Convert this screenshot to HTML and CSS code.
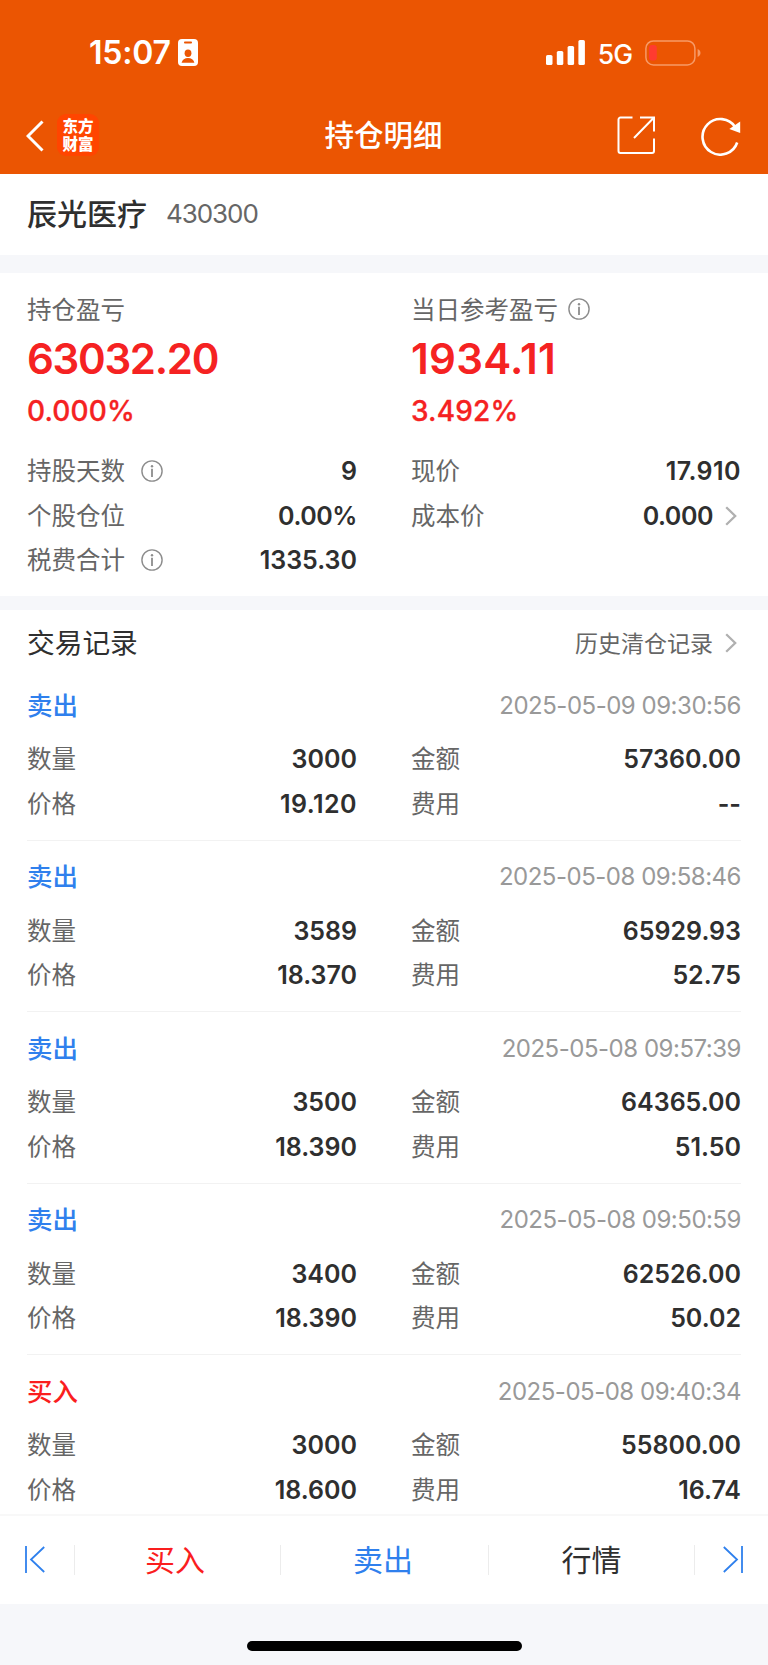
FILE: index.html
```html
<!DOCTYPE html>
<html lang="zh-CN">
<head>
<meta charset="utf-8">
<title>持仓明细</title>
<link rel="stylesheet" href="styles.css">
</head>
<body>
<svg class="defs" width="0" height="0" aria-hidden="true">
  <symbol id="info" viewBox="0 0 22 22"><circle cx="11" cy="11" r="10.1" fill="none" stroke="#8c8c8c" stroke-width="1.4"/><circle cx="11" cy="6.2" r="1.2" fill="#8c8c8c"/><path d="M11 8.8V17" stroke="#8c8c8c" stroke-width="1.8"/></symbol>
  <symbol id="chevron" viewBox="0 0 12 20"><path d="M1.2 1.2L10.2 10L1.2 18.8" fill="none" stroke="#b0b0b0" stroke-width="2.3"/></symbol>
</svg>
<div class="screen">
  <header class="header">
    <div class="status">
      <span class="clock">15:07</span>
      <svg class="badge" width="20" height="27" viewBox="0 0 20 27"><rect width="20" height="27" rx="4" fill="#fff"/><rect x="6" y="2.6" width="8" height="1.8" rx=".9" fill="#eb5502"/><ellipse cx="10" cy="14.2" rx="3.4" ry="3.7" fill="#eb5502"/><path d="M3.6 23.7C4.2 20.4 6.8 18.9 10 18.9s5.800 1.500 6.400 4.800z" fill="#eb5502"/></svg>
      <svg class="signal" width="39" height="25" viewBox="0 0 39 25" fill="#fff"><rect x="0" y="15" width="6.500" height="10" rx="1.600"/><rect x="10.800" y="11" width="6.500" height="14" rx="1.600"/><rect x="21.600" y="6" width="6.500" height="19" rx="1.600"/><rect x="32.400" y="0" width="6.500" height="25" rx="1.600"/></svg>
      <span class="net">5G</span>
      <svg class="battery" width="56" height="26" viewBox="0 0 56 26"><rect x=".9" y=".9" width="49" height="24" rx="7.500" fill="none" stroke="#f79a67" stroke-width="1.500"/><path d="M52.600 9v8c1.800-.7 2.900-2.300 2.900-4s-1.100-3.300-2.900-4z" fill="#f79a67"/><rect x="4" y="5" width="7.800" height="15.500" rx="3" fill="#ff3b30"/></svg>
    </div>
    <div class="titlebar">
      <svg class="back" width="18" height="32" viewBox="0 0 18 32"><path d="M16.500 1.500L2 16l14.500 14.500" fill="none" stroke="#fff" stroke-width="3"/></svg>
      <div class="logo">东方<br>财富</div>
      <h1 class="title">持仓明细</h1>
      <svg class="share" width="39" height="39" viewBox="0 0 39 39" fill="none" stroke="#fff" stroke-width="2"><path d="M15.500 1.500H3.500a2 2 0 0 0-2 2V35a2 2 0 0 0 2 2H35a2 2 0 0 0 2-2V22.500"/><path d="M23 1.500h14V15.500M37 1.500L17 22"/></svg>
      <svg class="refresh" width="40" height="40" viewBox="0 0 40 40"><path d="M34.300 11.200A17.800 17.800 0 1 0 36.200 26.500" fill="none" stroke="#fff" stroke-width="2.600"/><path d="M39.200 5.500V17L28.300 13z" fill="#fff"/></svg>
    </div>
  </header>

  <section class="stock"><h2 class="name">辰光医疗</h2><span class="code">430300</span></section>

  <section class="summary">
    <div class="col">
      <div class="caption">持仓盈亏</div>
      <div class="amount tight">63032.20</div>
      <div class="percent">0.000%</div>
      <div class="row"><span class="label">持股天数</span><svg class="info wide"><use href="#info"/></svg><span class="value">9</span></div>
      <div class="row"><span class="label">个股仓位</span><span class="value narrow">0.00%</span></div>
      <div class="row"><span class="label">税费合计</span><svg class="info wide"><use href="#info"/></svg><span class="value">1335.30</span></div>
    </div>
    <div class="col">
      <div class="caption">当日参考盈亏<svg class="info"><use href="#info"/></svg></div>
      <div class="amount">1934.11</div>
      <div class="percent">3.492%</div>
      <div class="row"><span class="label">现价</span><span class="value open">17.910</span></div>
      <div class="row"><span class="label">成本价</span><span class="value narrow">0.000</span><svg class="chevron"><use href="#chevron"/></svg></div>
    </div>
  </section>

  <section class="trades">
    <div class="trades-head"><h2 class="trades-title">交易记录</h2><span class="history">历史清仓记录</span><svg class="chevron"><use href="#chevron"/></svg></div>

    <article class="record">
      <div class="record-head"><span class="side sell">卖出</span><time class="time">2025-05-09 09:30:56</time></div>
      <div class="grid">
        <div class="row"><span class="label">数量</span><span class="value">3000</span></div>
        <div class="row"><span class="label">金额</span><span class="value">57360.00</span></div>
        <div class="row"><span class="label">价格</span><span class="value open">19.120</span></div>
        <div class="row"><span class="label">费用</span><span class="value">--</span></div>
      </div>
    </article>
    <article class="record">
      <div class="record-head"><span class="side sell">卖出</span><time class="time">2025-05-08 09:58:46</time></div>
      <div class="grid">
        <div class="row"><span class="label">数量</span><span class="value">3589</span></div>
        <div class="row"><span class="label">金额</span><span class="value">65929.93</span></div>
        <div class="row"><span class="label">价格</span><span class="value">18.370</span></div>
        <div class="row"><span class="label">费用</span><span class="value">52.75</span></div>
      </div>
    </article>
    <article class="record">
      <div class="record-head"><span class="side sell">卖出</span><time class="time">2025-05-08 09:57:39</time></div>
      <div class="grid">
        <div class="row"><span class="label">数量</span><span class="value">3500</span></div>
        <div class="row"><span class="label">金额</span><span class="value">64365.00</span></div>
        <div class="row"><span class="label">价格</span><span class="value">18.390</span></div>
        <div class="row"><span class="label">费用</span><span class="value">51.50</span></div>
      </div>
    </article>
    <article class="record">
      <div class="record-head"><span class="side sell">卖出</span><time class="time">2025-05-08 09:50:59</time></div>
      <div class="grid">
        <div class="row"><span class="label">数量</span><span class="value">3400</span></div>
        <div class="row"><span class="label">金额</span><span class="value">62526.00</span></div>
        <div class="row"><span class="label">价格</span><span class="value">18.390</span></div>
        <div class="row"><span class="label">费用</span><span class="value">50.02</span></div>
      </div>
    </article>
    <article class="record">
      <div class="record-head"><span class="side buy">买入</span><time class="time">2025-05-08 09:40:34</time></div>
      <div class="grid">
        <div class="row"><span class="label">数量</span><span class="value">3000</span></div>
        <div class="row"><span class="label">金额</span><span class="value">55800.00</span></div>
        <div class="row"><span class="label">价格</span><span class="value">18.600</span></div>
        <div class="row"><span class="label">费用</span><span class="value">16.74</span></div>
      </div>
    </article>
  </section>

  <nav class="toolbar">
    <a class="edge first"><svg width="20" height="27" viewBox="0 0 20 27" fill="none" stroke="#2f80ed" stroke-width="1.800"><path d="M1 0V27M19.200 1L6 13.500L19.200 26"/></svg></a>
    <a class="tab buy">买入</a>
    <a class="tab sell">卖出</a>
    <a class="tab quote">行情</a>
    <a class="edge last"><svg width="20" height="27" viewBox="0 0 20 27" fill="none" stroke="#2f80ed" stroke-width="1.800"><path d="M19 0V27M.8 1L14 13.500L.8 26"/></svg></a>
  </nav>
  <footer class="home"><div class="indicator"></div></footer>
</div>
</body>
</html>
```

FILE: styles.css
```css
* { box-sizing: border-box; }
body { margin: 0; background: #f6f7fa; font-family: "Noto Sans CJK SC", sans-serif; color: #2f2f2f; }
h1, h2 { margin: 0; font-weight: 500; }
svg { display: block; flex: none; }
.defs { position: absolute; }
.screen { width: 768px; height: 1665px; display: flex; flex-direction: column; overflow: hidden; }

.header { height: 174px; background: #eb5502; color: #fff; flex: none; }
.status { height: 97px; padding: 8px 67px 0 89px; display: flex; align-items: center; }
.clock { font: 600 32px/40px Inter, sans-serif; letter-spacing: -.2px; width: 89px; padding-top: 1px; }
.signal { margin-left: auto; }
.net { font: 500 26.500px/34px Inter, sans-serif; letter-spacing: -1px; margin: 2px 13px 0 13px; }
.titlebar { height: 77px; padding: 0 27px 0 26px; display: grid; grid-template-columns: 18px 55px 1fr 39px 45px 40px; align-items: center; }
.logo { width: 42px; height: 42px; margin: -2px 0 0 13px; padding-top: 2px; border-radius: 9px; background: #ff4500; text-align: center; font: 900 15.500px/18px "Noto Sans CJK SC", sans-serif; }
.title { font-size: 29.500px; line-height: 44px; text-align: center; padding: 0 0 5px 51px; }
.refresh { grid-column: 6; }

.stock { height: 81px; flex: none; background: #fff; padding: 0 27px; display: flex; align-items: center; }
.name { font-size: 30px; line-height: 44px; padding-bottom: 6px; }
.code { font: 400 26px/40px Inter, sans-serif; letter-spacing: -1.050px; color: #666; margin-left: 19px; padding-bottom: 1px; }

.summary { height: 323px; margin-top: 18px; flex: none; background: #fff; padding: 14px 27px 0; display: grid; grid-template-columns: 330px 330px; column-gap: 54px; align-content: start; }
.caption { height: 45px; display: flex; align-items: center; gap: 10px; font-size: 24.500px; color: #666; line-height: 36px; padding-bottom: 2px; }
.amount { height: 54px; font: 600 42px/54px Inter, sans-serif; letter-spacing: .3px; color: #f52222; }
.amount.tight { letter-spacing: -1.300px; }
.percent { height: 50px; margin-bottom: 13px; font: 500 28px/50px Inter, sans-serif; letter-spacing: .15px; color: #f52222; -webkit-text-stroke: .3px #f52222; }
.row { height: 44.600px; display: flex; align-items: center; }
.label { font-size: 24.500px; line-height: 36px; color: #666; padding-bottom: 2px; }
.value { margin-left: auto; font: 600 25px/36px Inter, sans-serif; }
.value.narrow { letter-spacing: -.450px; }
.value.open { letter-spacing: .450px; }
.info { width: 22px; height: 22px; }
.info.wide { margin-left: 16px; }
.chevron { width: 12px; height: 20px; margin: 0 4px 0 12px; }

.trades { height: 904px; margin-top: 14px; flex: none; background: #fff; padding: 0 27px; overflow: hidden; }
.trades-head { height: 59px; padding-top: 6px; display: flex; align-items: center; }
.trades-title { font-size: 27.700px; line-height: 40px; font-weight: 400; padding-bottom: 4px; }
.history { margin-left: auto; font-size: 23px; color: #666; line-height: 34px; padding-bottom: 2px; }
.record { height: 171.500px; padding-top: 16px; border-bottom: 1px solid #f2f2f2; }
.record-head { height: 41px; display: flex; align-items: center; margin-bottom: 11px; }
.side { font-size: 25.500px; font-weight: 500; line-height: 38px; padding-bottom: 4px; }
.time { margin-left: auto; font: 400 24px/36px Inter, sans-serif; letter-spacing: -.480px; color: #999; }
.sell { color: #2f80ed; }
.buy { color: #fa1e1e; }
.grid { display: grid; grid-template-columns: 330px 330px; column-gap: 54px; }

.toolbar { height: 90px; flex: none; background: #fff; border-top: 2px solid #f8f8f8; display: grid; grid-template-columns: 74px 206px 208px 206px 74px; align-items: center; }
.tab, .edge { height: 30px; display: flex; align-items: center; justify-content: center; }
.tab { border-left: 1px solid #ececec; font-size: 30px; line-height: 44px; padding-bottom: 5px; }
.tab.buy { padding-right: 5px; }
.tab.sell { padding-right: 3px; }
.quote { color: #2f2f2f; }
.edge.first { padding: 0 5px 2px 0; }
.edge.last { border-left: 1px solid #ececec; padding: 0 0 2px 3px; }
.home { height: 61px; flex: none; padding-top: 37px; }
.indicator { width: 275px; height: 10px; margin: 0 auto; border-radius: 5px; background: #000; }
```
